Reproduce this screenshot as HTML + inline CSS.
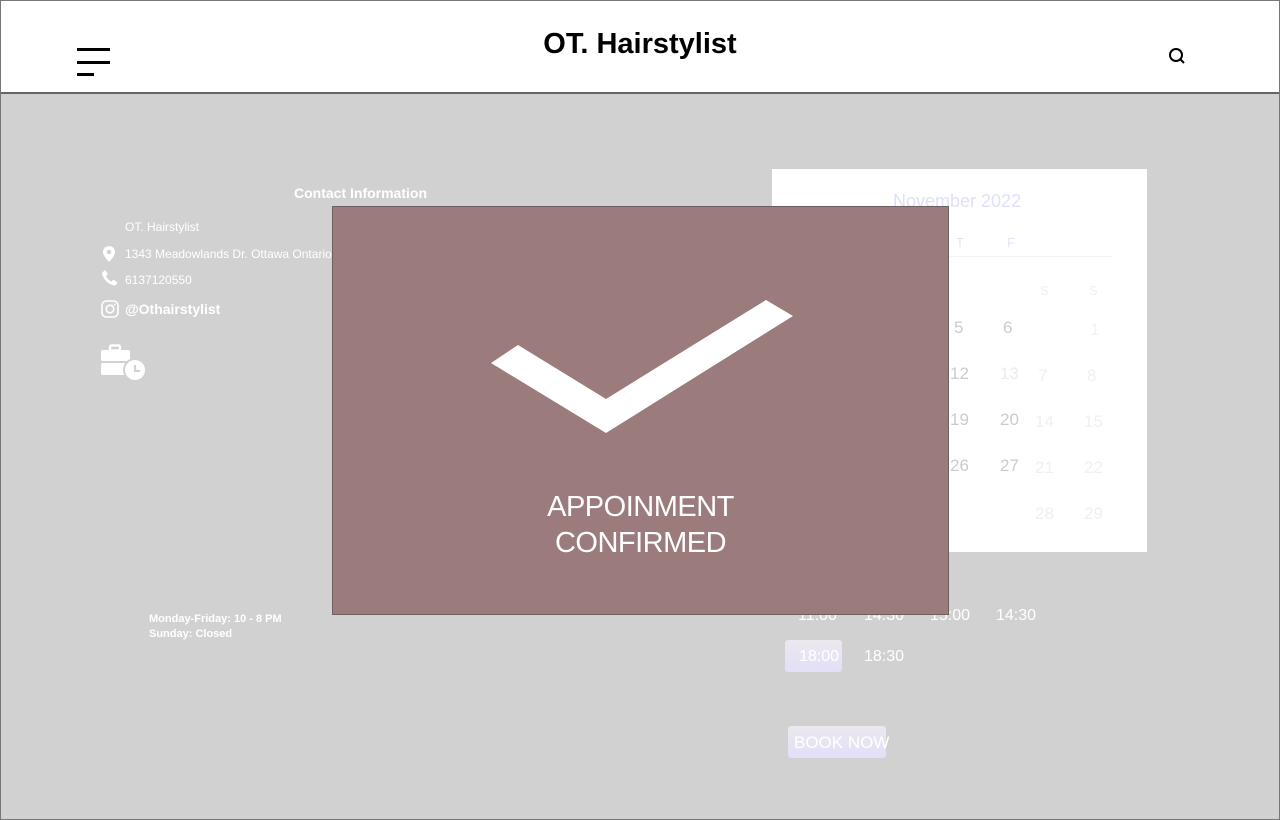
<!DOCTYPE html>
<html><head><style>
*{margin:0;padding:0;box-sizing:border-box}
body{width:1280px;height:820px;overflow:hidden;background:#d1d1d1;font-family:"Liberation Sans",sans-serif;position:relative}
.frame{position:absolute;left:0;top:0;width:1280px;height:820px;border:1px solid #777;pointer-events:none}
header{position:absolute;left:0;top:0;width:1280px;height:94px;background:#fff;border-bottom:2px solid #666}
.t{position:absolute;white-space:nowrap}
.bar{position:absolute;background:#000;height:3px}
.cal{position:absolute;left:772px;top:169px;width:375px;height:383px;background:#fff}
.w{color:#fff}
</style></head><body>
<header>
<div class="bar" style="left:77px;top:48px;width:33px"></div>
<div class="bar" style="left:77px;top:61px;width:33px"></div>
<div class="bar" style="left:77px;top:73px;width:17px"></div>
<div class="t" style="left:0;width:1280px;text-align:center;top:28px;font-size:29px;font-weight:bold">OT. Hairstylist</div>
<svg style="position:absolute;left:1168px;top:47px" width="18" height="18" viewBox="0 0 18 18"><circle cx="8" cy="8" r="6" fill="none" stroke="#000" stroke-width="2"/><line x1="12.5" y1="12.5" x2="16" y2="16" stroke="#000" stroke-width="2"/></svg>
</header>

<div class="t w" style="left:294px;top:185px;font-size:14px;font-weight:bold">Contact Information</div>
<div class="t w" style="left:125px;top:220px;font-size:12px">OT. Hairstylist</div>
<svg style="position:absolute;left:102px;top:246px" width="14" height="16" viewBox="0 0 14 16"><path d="M7 0C3.5 0 1 2.6 1 6c0 4 6 10 6 10s6-6 6-10C13 2.6 10.5 0 7 0z" fill="#fff"/><circle cx="7" cy="6" r="2.2" fill="#d1d1d1"/></svg>
<div class="t w" style="left:125px;top:247px;font-size:12px">1343 Meadowlands Dr. Ottawa Ontario</div>
<svg style="position:absolute;left:102px;top:270px" width="16" height="16" viewBox="0 0 16 16"><path d="M3 0l3 4-2 2c1 2.5 3 4.5 5.5 5.5l2-2 4 3-2 3C6 15 1 9 0 3z" fill="#fff"/></svg>
<div class="t w" style="left:125px;top:273px;font-size:12px">6137120550</div>
<svg style="position:absolute;left:101px;top:300px" width="18" height="18" viewBox="0 0 18 18"><rect x="1" y="1" width="16" height="16" rx="4.5" fill="none" stroke="#fff" stroke-width="1.6"/><circle cx="9" cy="9" r="3.8" fill="none" stroke="#fff" stroke-width="1.6"/><circle cx="13.5" cy="4.5" r="1" fill="#fff"/></svg>
<div class="t w" style="left:125px;top:301px;font-size:14px;font-weight:bold">@Othairstylist</div>
<svg style="position:absolute;left:100px;top:344px" width="48" height="38" viewBox="0 0 48 38"><rect x="10" y="1.5" width="10" height="5" rx="1.5" fill="none" stroke="#fff" stroke-width="2.5"/><rect x="1" y="6" width="29" height="11" rx="2" fill="#fff"/><rect x="1" y="19" width="29" height="12" rx="2" fill="#fff"/><circle cx="35" cy="26" r="12" fill="#d1d1d1"/><circle cx="35" cy="26" r="10" fill="#fff"/><path d="M35 21v6h5" stroke="#d1d1d1" stroke-width="2.2" fill="none"/></svg>
<div class="t w" style="left:149px;top:612px;font-size:11px;font-weight:bold;line-height:15px">Monday-Friday: 10 - 8 PM<br>Sunday: Closed</div>

<div class="cal">
<div class="t" style="left:121px;top:22px;font-size:18px;color:#e0e0f8">November 2022</div>
<div class="t" style="left:184px;top:66px;font-size:13px;color:#e4e4f4">T</div>
<div class="t" style="left:235px;top:66px;font-size:13px;color:#e4e4f4">F</div>
<div style="position:absolute;left:160px;top:87px;width:180px;height:1px;background:#f4f4f8"></div>
<div class="t" style="left:268px;top:114px;font-size:13px;color:#f0f0f4">S</div>
<div class="t" style="left:317px;top:114px;font-size:13px;color:#f0f0f4">S</div>
<div class="t" style="left:182px;top:149px;font-size:17px;color:#ccc">5</div>
<div class="t" style="left:231px;top:149px;font-size:17px;color:#ccc">6</div>
<div class="t" style="left:318px;top:151px;font-size:17px;color:#f2f2f2">1</div>
<div class="t" style="left:178px;top:195px;font-size:17px;color:#ccc">12</div>
<div class="t" style="left:228px;top:195px;font-size:17px;color:#ececec">13</div>
<div class="t" style="left:266px;top:197px;font-size:17px;color:#f0f0f0">7</div>
<div class="t" style="left:315px;top:197px;font-size:17px;color:#f0f0f0">8</div>
<div class="t" style="left:178px;top:241px;font-size:17px;color:#ccc">19</div>
<div class="t" style="left:228px;top:241px;font-size:17px;color:#ccc">20</div>
<div class="t" style="left:263px;top:243px;font-size:17px;color:#f0f0f0">14</div>
<div class="t" style="left:312px;top:243px;font-size:17px;color:#f0f0f0">15</div>
<div class="t" style="left:178px;top:287px;font-size:17px;color:#ccc">26</div>
<div class="t" style="left:228px;top:287px;font-size:17px;color:#ccc">27</div>
<div class="t" style="left:263px;top:289px;font-size:17px;color:#f0f0f0">21</div>
<div class="t" style="left:312px;top:289px;font-size:17px;color:#f0f0f0">22</div>
<div class="t" style="left:263px;top:335px;font-size:17px;color:#f0f0f0">28</div>
<div class="t" style="left:312px;top:335px;font-size:17px;color:#f0f0f0">29</div>
</div>

<div class="t w" style="left:798px;top:607px;font-size:16px">11:00</div>
<div class="t w" style="left:864px;top:607px;font-size:16px">14:30</div>
<div class="t w" style="left:930px;top:607px;font-size:16px">15:00</div>
<div class="t w" style="left:996px;top:607px;font-size:16px">14:30</div>
<div style="position:absolute;left:785px;top:640px;width:57px;height:32px;border-radius:3px;background:linear-gradient(#ece8ee,#e2dff8)"></div>
<div class="t" style="left:799px;top:648px;font-size:16px;color:#fff">18:00</div>
<div class="t w" style="left:864px;top:648px;font-size:16px">18:30</div>
<div style="position:absolute;left:788px;top:726px;width:98px;height:32px;border-radius:3px;background:linear-gradient(#ece8ee,#e2dff8)"></div>
<div class="t" style="left:794px;top:733px;font-size:17px;color:#fff">BOOK NOW</div>

<div style="position:absolute;left:332px;top:206px;width:617px;height:409px;background:#9b7b7b;border:1px solid #6e6060">
<svg style="position:absolute;left:0;top:0" width="617" height="409"><polygon points="158,156 185,138 273,192 433,93 460,109 273,226" fill="#fff"/></svg>
<div class="t w" style="left:0;width:615px;text-align:center;top:282px;font-size:29px;line-height:36px;letter-spacing:-0.5px">APPOINMENT<br>CONFIRMED</div>
</div>
<div class="frame"></div>
</body></html>
